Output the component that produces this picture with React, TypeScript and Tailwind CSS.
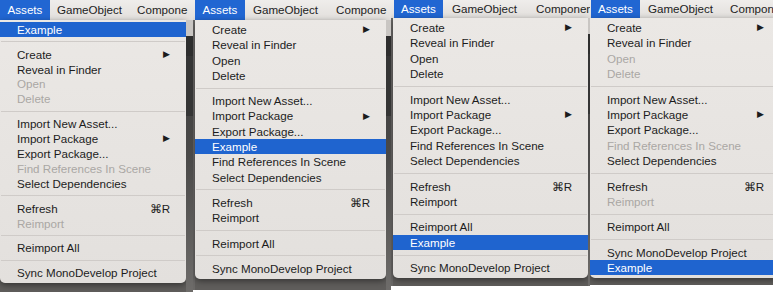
import React from 'react';

type Item =
  | { sep: true }
  | { label: string; disabled?: boolean; arrow?: boolean; shortcut?: string; active?: boolean };

const SEP: Item = { sep: true };
const ex: Item = { label: 'Example', active: true };

function baseItems(dim: boolean): Item[] {
  return [
    { label: 'Create', arrow: true },
    { label: 'Reveal in Finder' },
    { label: 'Open', disabled: dim },
    { label: 'Delete', disabled: dim },
    SEP,
    { label: 'Import New Asset...' },
    { label: 'Import Package', arrow: true },
    { label: 'Export Package...' },
    { label: 'Find References In Scene', disabled: dim },
    { label: 'Select Dependencies' },
    SEP,
    { label: 'Refresh', shortcut: '⌘R' },
    { label: 'Reimport', disabled: dim },
    SEP,
    { label: 'Reimport All' },
    SEP,
    { label: 'Sync MonoDevelop Project' },
  ];
}

const p1 = [ex, SEP, ...baseItems(true)];
const b2 = baseItems(false);
const p2 = [...b2.slice(0, 8), ex, ...b2.slice(8)];
const b3 = baseItems(false);
const p3 = [...b3.slice(0, 15), ex, ...b3.slice(15)];
const p4 = [...baseItems(true), ex];

function Menu({ items, rowH }: { items: Item[]; rowH: string }) {
  return (
    <div className="flex flex-col pt-[2px] pb-[3px] bg-gradient-to-b from-[#ebe8e5] to-[#e3e0dd] rounded-b-[5px] shadow-[0_2px_6px_rgba(0,0,0,0.45)]">
      {items.map((it, i) =>
        'sep' in it ? (
          <div key={i} className="h-[10px] flex items-center px-[1px]">
            <div className="h-px w-full bg-[#cfcbc8]" />
          </div>
        ) : (
          <div
            key={i}
            className={`${rowH} flex items-center pl-[17px] pr-[16px] ${
              it.active ? 'bg-[#1f64cf] text-white' : it.disabled ? 'text-[#aaa7a4]' : 'text-[#1c1c1c]'
            }`}
          >
            <span className="flex-1 whitespace-nowrap">{it.label}</span>
            {it.arrow && <span className="text-[9px] leading-none">▶</span>}
            {it.shortcut && <span className="whitespace-nowrap">{it.shortcut}</span>}
          </div>
        )
      )}
    </div>
  );
}

function MenuBar({ h, lead, assetsW, gap, tail }: { h: string; lead: string; assetsW: string; gap: string; tail: string }) {
  return (
    <div className={`${h} flex items-center bg-gradient-to-b from-[#efedeb] to-[#e2dfdc] text-[#222] whitespace-nowrap overflow-hidden`}>
      <div className={`${lead} flex-none`} />
      <div className={`${assetsW} flex-none h-full flex items-center justify-center bg-[#2166d2] text-white`}>Assets</div>
      <div className={`${gap} flex-none`}>GameObject</div>
      <div className="flex-none">{tail}</div>
    </div>
  );
}

function Backdrop() {
  return (
    <div className="flex-1 flex flex-col bg-gradient-to-b from-[#3b3b3b] via-[#4a4948] to-[#6e6c6a]">
      <div className="h-[16px] bg-[#c9c6c3]" />
      <div className="h-[20px] bg-[#2e2e2e]" />
      <div className="h-[60px] bg-[#353535]" />
      <div className="flex-1" />
    </div>
  );
}

export default function App() {
  return (
    <div className="w-[773px] h-[292px] overflow-hidden bg-white flex text-[11.6px] font-['Liberation_Sans',Arial,sans-serif]">
      {/* panel 1 */}
      <div className="w-[193px] flex-none h-[292px] flex flex-col bg-[#5f5d5b] overflow-hidden">
        <MenuBar h="h-[20px]" lead="w-0" assetsW="w-[50px]" gap="ml-[7px] mr-[15px]" tail="Compone" />
        <div className="flex flex-1">
          <div className="w-[186px] flex-none">
            <Menu items={p1} rowH="h-[14.9px]" />
          </div>
          <Backdrop />
        </div>
      </div>

      {/* panel 2 */}
      <div className="w-[198px] flex-none h-[290px] flex flex-col bg-[#5f5d5b] overflow-hidden">
        <MenuBar h="h-[20px]" lead="w-[2px]" assetsW="w-[50px]" gap="ml-[8px] mr-[18px]" tail="Compone" />
        <div className="flex flex-1">
          <div className="w-[2px] flex-none bg-[#6a6866]" />
          <div className="w-[191px] flex-none">
            <Menu items={p2} rowH="h-[15.3px]" />
          </div>
          <Backdrop />
        </div>
      </div>

      {/* panel 3 */}
      <div className="w-[199px] flex-none h-[286px] flex flex-col bg-[#5f5d5b] overflow-hidden">
        <MenuBar h="h-[18px]" lead="w-[3px]" assetsW="w-[49px]" gap="ml-[9px] mr-[19px]" tail="Componen" />
        <div className="flex flex-1">
          <div className="w-[2px] flex-none bg-[#6a6866]" />
          <div className="w-[195px] flex-none">
            <Menu items={p3} rowH="h-[15.4px]" />
          </div>
          <Backdrop />
        </div>
      </div>

      {/* panel 4 */}
      <div className="w-[183px] flex-none h-[285px] flex flex-col bg-[#5f5d5b] overflow-hidden">
        <MenuBar h="h-[18px]" lead="w-[1px]" assetsW="w-[49px]" gap="ml-[8px] mr-[17px]" tail="Component" />
        <div className="flex flex-1">
          <div className="w-[190px] flex-none">
            <Menu items={p4} rowH="h-[15.4px]" />
          </div>
        </div>
      </div>
    </div>
  );
}
